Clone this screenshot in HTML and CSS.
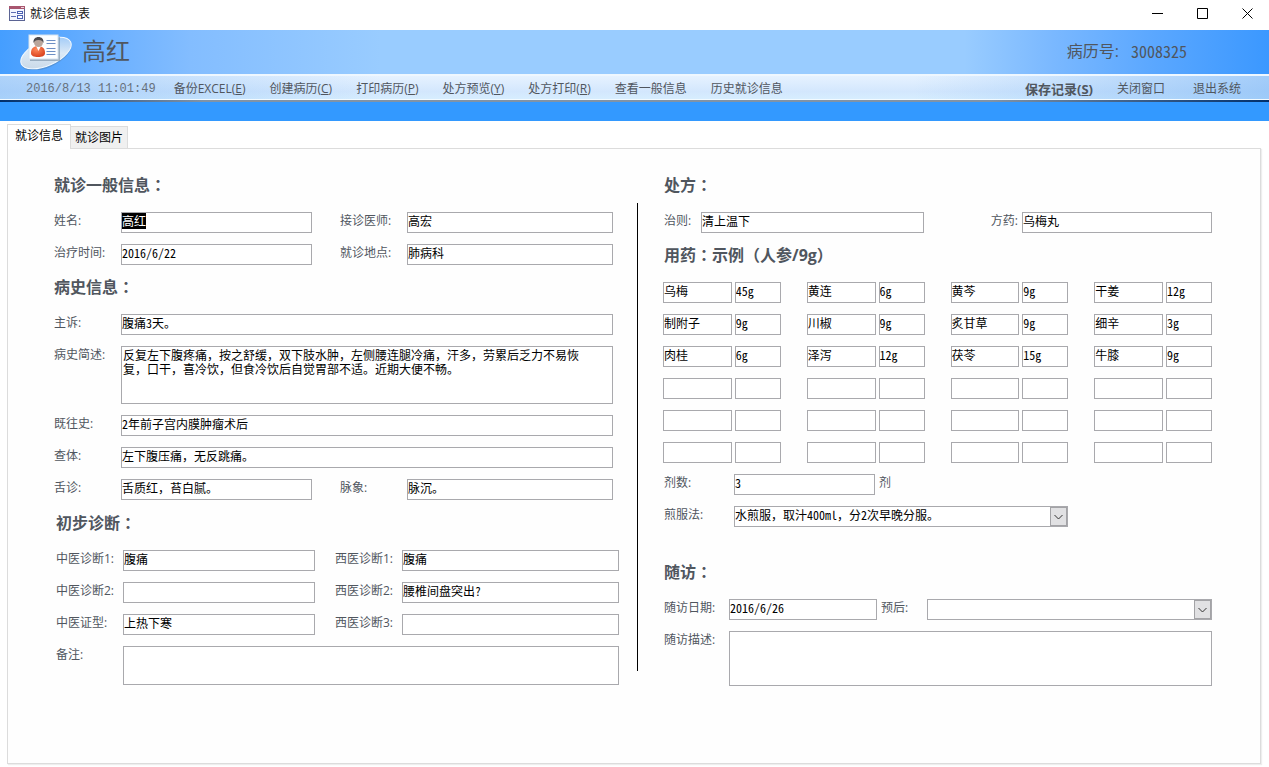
FILE: index.html
```html
<!DOCTYPE html>
<html lang="zh-CN">
<head>
<meta charset="utf-8">
<meta name="viewport" content="width=device-width, initial-scale=1">
<title>就诊信息表</title>
<link rel="stylesheet" href="styles.css">
</head>
<body>
<div class="window">
  <div class="titlebar">
    <svg class="form-icon" width="16" height="16" viewBox="0 0 16 16" shape-rendering="crispEdges" aria-hidden="true">
      <rect x="0.5" y="0.5" width="15" height="14" fill="#f4f6ff" stroke="#5b6494"/>
      <rect x="0" y="0" width="16" height="3" fill="#a8566f"/>
      <rect x="12" y="1" width="3" height="1" fill="#f0d6dc"/>
      <path d="M2 6h5M2 10h5" stroke="#5f6fb4" stroke-width="1" transform="translate(0 .5)"/>
      <rect x="8.5" y="5.5" width="5" height="2" fill="#fff" stroke="#4c62b4"/>
      <rect x="8.5" y="9.5" width="5" height="3" fill="#fff" stroke="#4c62b4"/>
    </svg>
    <span class="window-title">就诊信息表</span>
    <div class="window-buttons">
      <button type="button" aria-label="最小化"><svg width="11" height="11" viewBox="0 0 11 11"><path d="M0 5.5h11"/></svg></button>
      <button type="button" aria-label="最大化"><svg width="11" height="11" viewBox="0 0 11 11"><path d="M.5 .5h10v10H.5z"/></svg></button>
      <button type="button" aria-label="关闭"><svg width="11" height="11" viewBox="0 0 11 11"><path d="M.5 .5l10 10M10.5 .5l-10 10"/></svg></button>
    </div>
  </div>

  <header class="banner">
    <svg class="patient-icon" width="54" height="38" viewBox="0 0 54 38" aria-hidden="true">
      <defs>
        <linearGradient id="disc" x1="0" y1="1" x2="1" y2="0">
          <stop offset="0" stop-color="#c3d3e2"/><stop offset=".5" stop-color="#dbe9f6"/><stop offset="1" stop-color="#8cc0f8"/>
        </linearGradient>
        <radialGradient id="shirt" cx=".4" cy=".3" r=".8">
          <stop offset="0" stop-color="#ff8a5c"/><stop offset="1" stop-color="#d63a16"/>
        </radialGradient>
      </defs>
      <ellipse cx="27" cy="22.500" rx="27" ry="13" transform="rotate(-24 27 22.500)" fill="#4f7fae" opacity=".45"/>
      <ellipse cx="27" cy="21" rx="27" ry="12.500" transform="rotate(-24 27 21)" fill="url(#disc)" stroke="#f4faff"/>
      <rect x="11" y="5" width="30" height="24" fill="#6a8298" opacity=".55"/>
      <rect x="10" y="3" width="29" height="24" fill="#fdfeff" stroke="#d5e2ee"/>
      <path d="M12 21c0-5 3-7 7-7s7 2 7 7c0 3-3 4-7 4s-7-1-7-4z" fill="url(#shirt)"/>
      <path d="M17 14h5l-2.500 5z" fill="#fff"/>
      <circle cx="19.500" cy="10.500" r="4.500" fill="#b9a69c"/>
      <path d="M14.500 11c-.5-4 2-6 5-6s5.500 2 5 6c-1-2-2-3-5-3s-4 1-5 3z" fill="#4c4a4e"/>
      <path d="M27.500 8.500h9M27.500 11.500h9M27.500 16.500h9M27.500 19.500h9M27.500 22.500h9" stroke="#6d8fc4"/>
    </svg>
    <h1 class="patient-name">高红</h1>
    <div class="record"><span>病历号:</span><span class="record-number">3008325</span></div>
  </header>

  <nav class="menu">
    <time class="clock">2016/8/13 11:01:49</time>
    <button type="button">备份EXCEL(<u>E</u>)</button>
    <button type="button">创建病历(<u>C</u>)</button>
    <button type="button">打印病历(<u>P</u>)</button>
    <button type="button">处方预览(<u>Y</u>)</button>
    <button type="button">处方打印(<u>R</u>)</button>
    <button type="button">查看一般信息</button>
    <button type="button">历史就诊信息</button>
    <button type="button" class="save">保存记录(<u>S</u>)</button>
    <button type="button">关闭窗口</button>
    <button type="button">退出系统</button>
  </nav>
  <div class="strip"></div>

  <main class="workspace">
    <div class="tabs" role="tablist">
      <button type="button" class="tab active" role="tab" aria-selected="true">就诊信息</button>
      <button type="button" class="tab" role="tab" aria-selected="false">就诊图片</button>
    </div>
    <form class="panel">
      <div class="column visit">
        <section class="general">
          <h2>就诊一般信息<span class="mid" lang="ja">：</span></h2>
          <div class="fields pair">
            <label for="name">姓名:</label><input id="name" value="高红">
            <label for="doctor">接诊医师:</label><input id="doctor" value="高宏">
            <label for="date">治疗时间:</label><input id="date" value="2016/6/22">
            <label for="place">就诊地点:</label><input id="place" value="肺病科">
          </div>
        </section>
        <section class="general">
          <h2>病史信息<span class="mid" lang="ja">：</span></h2>
          <div class="fields pair">
            <label for="chief">主诉:</label><input id="chief" class="wide" value="腹痛3天。">
            <label for="history">病史简述:</label><textarea id="history" class="wide history">反复左下腹疼痛，按之舒缓，双下肢水肿，左侧腰连腿冷痛，汗多，劳累后乏力不易恢复，口干，喜冷饮，但食冷饮后自觉胃部不适。近期大便不畅。</textarea>
            <label for="past">既往史:</label><input id="past" class="wide" value="2年前子宫内膜肿瘤术后">
            <label for="exam">查体:</label><input id="exam" class="wide" value="左下腹压痛，无反跳痛。">
            <label for="tongue">舌诊:</label><input id="tongue" value="舌质红，苔白腻。">
            <label for="pulse">脉象:</label><input id="pulse" value="脉沉。">
          </div>
        </section>
        <section class="diagnosis">
          <h2>初步诊断<span class="mid" lang="ja">：</span></h2>
          <div class="fields pair">
            <label for="tcm1">中医诊断1:</label><input id="tcm1" value="腹痛">
            <label for="west1">西医诊断1:</label><input id="west1" value="腹痛">
            <label for="tcm2">中医诊断2:</label><input id="tcm2">
            <label for="west2">西医诊断2:</label><input id="west2" value="腰椎间盘突出?">
            <label for="pattern">中医证型:</label><input id="pattern" value="上热下寒">
            <label for="west3">西医诊断3:</label><input id="west3">
            <label for="note">备注:</label><textarea id="note" class="wide note"></textarea>
          </div>
        </section>
      </div>

      <div class="divider"></div>

      <div class="column treatment">
        <section>
          <h2>处方<span class="mid" lang="ja">：</span></h2>
          <div class="fields formula">
            <label for="principle">治则:</label><input id="principle" value="清上温下">
            <label for="formula" class="end">方药:</label><input id="formula" value="乌梅丸">
          </div>
        </section>
        <section>
          <h2>用药<span class="mid" lang="ja">：</span>示例（人参/9g）</h2>
          <div class="drugs">
            <div class="drug"><input aria-label="药名" value="乌梅"><input aria-label="剂量" value="45g"></div>
            <div class="drug"><input aria-label="药名" value="黄连"><input aria-label="剂量" value="6g"></div>
            <div class="drug"><input aria-label="药名" value="黄芩"><input aria-label="剂量" value="9g"></div>
            <div class="drug"><input aria-label="药名" value="干姜"><input aria-label="剂量" value="12g"></div>
            <div class="drug"><input aria-label="药名" value="制附子"><input aria-label="剂量" value="9g"></div>
            <div class="drug"><input aria-label="药名" value="川椒"><input aria-label="剂量" value="9g"></div>
            <div class="drug"><input aria-label="药名" value="炙甘草"><input aria-label="剂量" value="9g"></div>
            <div class="drug"><input aria-label="药名" value="细辛"><input aria-label="剂量" value="3g"></div>
            <div class="drug"><input aria-label="药名" value="肉桂"><input aria-label="剂量" value="6g"></div>
            <div class="drug"><input aria-label="药名" value="泽泻"><input aria-label="剂量" value="12g"></div>
            <div class="drug"><input aria-label="药名" value="茯苓"><input aria-label="剂量" value="15g"></div>
            <div class="drug"><input aria-label="药名" value="牛膝"><input aria-label="剂量" value="9g"></div>
            <div class="drug"><input aria-label="药名"><input aria-label="剂量"></div>
            <div class="drug"><input aria-label="药名"><input aria-label="剂量"></div>
            <div class="drug"><input aria-label="药名"><input aria-label="剂量"></div>
            <div class="drug"><input aria-label="药名"><input aria-label="剂量"></div>
            <div class="drug"><input aria-label="药名"><input aria-label="剂量"></div>
            <div class="drug"><input aria-label="药名"><input aria-label="剂量"></div>
            <div class="drug"><input aria-label="药名"><input aria-label="剂量"></div>
            <div class="drug"><input aria-label="药名"><input aria-label="剂量"></div>
            <div class="drug"><input aria-label="药名"><input aria-label="剂量"></div>
            <div class="drug"><input aria-label="药名"><input aria-label="剂量"></div>
            <div class="drug"><input aria-label="药名"><input aria-label="剂量"></div>
            <div class="drug"><input aria-label="药名"><input aria-label="剂量"></div>
          </div>
          <div class="fields dosage">
            <label for="doses">剂数:</label><input id="doses" value="3"><span class="unit">剂</span>
            <label for="method" class="first">煎服法:</label>
            <div class="combo method">
              <select id="method"><option>水煎服，取汁400ml，分2次早晚分服。</option></select>
              <svg class="arrow" viewBox="0 0 15 17" aria-hidden="true"><path d="M3.500 7l4 4 4-4"/></svg>
            </div>
          </div>
        </section>
        <section class="followup">
          <h2>随访<span class="mid" lang="ja">：</span></h2>
          <div class="fields follow">
            <label for="fdate">随访日期:</label><input id="fdate" value="2016/6/26">
            <label for="prognosis" class="after">预后:</label>
            <div class="combo">
              <select id="prognosis"><option></option></select>
              <svg class="arrow" viewBox="0 0 15 17" aria-hidden="true"><path d="M3.500 7l4 4 4-4"/></svg>
            </div>
            <label for="fnote">随访描述:</label><textarea id="fnote" class="wide fnote"></textarea>
          </div>
        </section>
      </div>
    </form>
  </main>
</div>
<script>
  document.getElementById("name").focus();
  document.getElementById("name").select();
</script>
</body>
</html>
```
FILE: styles.css
```css
* { box-sizing: border-box; }

body {
  margin: 0;
  background: #fff;
  color: #50565e;
  font: 12px/18px "Open Sans", "Noto Sans CJK SC", sans-serif;
}

button, input, textarea, select {
  margin: 0;
  border-radius: 0;
  font: inherit;
  color: inherit;
}

button { padding: 0; border: 0; background: none; white-space: nowrap; }

.window { display: flex; flex-direction: column; min-height: 100vh; }

/* Title bar */
.titlebar { display: flex; align-items: center; height: 30px; padding: 0 16px 3px 9px; }
.window-title { margin-left: 5px; color: #111; }
.window-buttons { display: flex; gap: 34px; margin-left: auto; }
.window-buttons button { display: flex; }
.window-buttons svg { fill: none; stroke: #000; }

/* Banner */
.banner {
  display: flex;
  align-items: center;
  height: 44px;
  padding: 0 82px 2px 19px;
  background: linear-gradient(90deg, #459eff 0, #6db1ff 9%, #83bdff 15%, #99ccff 30%, #99ccff 76%, #7ab8ff 83%, #5aa7ff 91%, #3b98ff 100%);
}
.patient-name { margin: 0 0 0 9px; font-size: 24px; font-weight: 400; line-height: 32px; }
.record { display: flex; gap: 12px; margin-left: auto; font-size: 16px; line-height: 24px; }
.record-number { font-family: "Noto Sans Mono CJK SC", "Noto Sans CJK SC", sans-serif; font-weight: 300; }

/* Menu */
.menu {
  display: flex;
  align-items: center;
  gap: 24px;
  height: 28px;
  padding: 0 28px 0 26px;
  border-top: 2px solid #eef7ff;
  background:
    linear-gradient(90deg, #002f6c, #8193a6 16%, #8193a6 78%, #002f6c) bottom / 100% 2px no-repeat,
    linear-gradient(#f2faff, #f2faff) 0 23px / 100% 1px no-repeat,
    linear-gradient(90deg, rgba(120, 180, 245, .5), rgba(200, 226, 255, 0) 30%, rgba(200, 226, 255, 0) 72%, rgba(120, 180, 245, .6)),
    linear-gradient(#e6f2ff, #d3e7fd 60%, #d8f0ff);
}
.clock { margin-right: -6px; color: #66707c; font: 12px/18px "Liberation Mono", monospace; }
.menu .save { margin-left: auto; font-size: 13px; font-weight: 700; }
.menu button:last-child { margin-left: 4px; }
.strip { height: 19px; background: #3399ff; }

/* Tabs and panel */
.workspace { display: flex; flex: 1; flex-direction: column; padding: 3px 8px 3px 7px; }
.tabs { display: flex; align-items: flex-end; height: 24px; }
.tab { height: 22px; padding: 0 4px; border: 1px solid #dcdcdc; border-bottom: 0; border-left: 0; background: #f0f0f0; color: #000; }
.tab.active { z-index: 1; height: 25px; margin-bottom: -1px; padding: 0 7px 2px; border-left: 1px solid #dcdcdc; background: #fff; }

.panel {
  display: grid;
  flex: 1;
  grid-template-columns: minmax(0, 583fr) 1px minmax(0, 574fr);
  padding: 24px 48px 24px 46px;
  border: 1px solid #dcdcdc;
  background: #fefefe;
  box-shadow: 1px 1px 1px #eee;
}
.divider { height: 468px; margin-top: 30px; background: #000; }
.visit { padding-right: 18px; }
.treatment { padding-left: 25px; }
.general { padding-right: 6px; }
.diagnosis { padding-left: 2px; }

section + section { margin-top: 10px; }
.followup.followup { margin-top: 33px; }
h2 { height: 24px; margin: 0 0 15px; font-size: 16px; font-weight: 700; line-height: 22px; }
.general + .diagnosis { margin-top: 11px; }
.treatment h2, .treatment label { padding-left: 1px; }
.mid { font-family: "Noto Sans CJK JP", sans-serif; }

/* Fields */
.fields { display: grid; row-gap: 11px; }
.fields label, .unit { white-space: nowrap; }
.pair { grid-template-columns: 67px minmax(0, 191fr) 95px minmax(0, 206fr); }
.pair input:not(.wide) + label:nth-of-type(even) { padding-left: 28px; }
.diagnosis .pair { grid-template-columns: 67px minmax(0, 192fr) 87px minmax(0, 217fr); }
.diagnosis .pair input + label:nth-of-type(even) { padding-left: 20px; }
.formula { grid-template-columns: 38px minmax(0, 223fr) 98px minmax(0, 190fr); }
.dosage { grid-template-columns: 71px minmax(0, 141fr) minmax(0, 193fr) minmax(0, 144fr); margin-top: 11px; }
.follow { grid-template-columns: 66px minmax(0, 148fr) 50px minmax(0, 285fr); }
.wide { grid-column: 2 / -1; }
.first { grid-column: 1; }
.method { grid-column: 2 / 4; }
.unit { padding-left: 4px; }
.fields .end { padding-right: 4px; text-align: right; }
.fields .after { padding-left: 4px; }

input, textarea, select {
  display: block;
  width: 100%;
  min-width: 0;
  height: 21px;
  padding: 0 0 4px;
  border: 1px solid #a9a9ad;
  outline: 0;
  background: #fff;
  color: #000;
  font: 12px/14px "Noto Sans Mono CJK SC", "Noto Sans CJK SC", sans-serif;
}
input::selection { background: #000; color: #fff; }
textarea { padding: 1px 24px 1px 1px; resize: none; overflow: hidden; }
.history { height: 58px; }
.note { height: 39px; }
.fnote { height: 55px; }

.drugs { display: grid; grid-template-columns: repeat(4, minmax(0, 1fr)); gap: 11px 26px; }
.drug { display: grid; grid-template-columns: minmax(0, 69fr) minmax(0, 46fr); gap: 3px; }

.combo { position: relative; }
select { appearance: none; padding-right: 18px; }
.arrow {
  position: absolute;
  top: 1px;
  right: 1px;
  width: 17px;
  height: 19px;
  border: 1px solid #a3a3a6;
  background: #e1e1e3;
  fill: none;
  stroke: #333;
  pointer-events: none;
}
```
